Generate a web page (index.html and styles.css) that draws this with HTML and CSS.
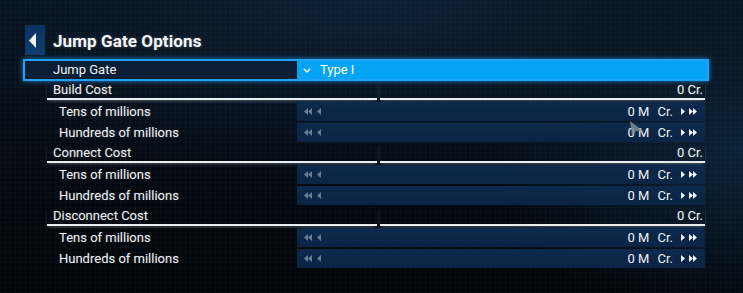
FILE: index.html
```html
<!DOCTYPE html>
<html>
<head>
<meta charset="utf-8">
<link rel="stylesheet" href="styles.css">
</head>
<body>
<div class="screen">
  <div class="panel">
    <div class="title-row">
      <div class="back-btn">
        <svg width="7" height="15" viewBox="0 0 7 15"><polygon points="7,0 7,15 0,7.5" fill="#f2f4f6"/></svg>
      </div>
      <h1 class="title">Jump Gate Options</h1>
    </div>

    <div class="select-row">
      <div class="select-label">Jump Gate</div>
      <div class="select-value">
        <svg class="chev" width="8" height="5" viewBox="0 0 8 5"><polyline points="0.8,0.8 4,4 7.2,0.8" fill="none" stroke="#fff" stroke-width="1.4"/></svg>
        <span>Type I</span>
      </div>
    </div>

    <div class="list">
      <div class="group">
        <div class="head">
          <span class="head-left">Build Cost</span>
          <span class="head-right">0 Cr.</span>
        </div>
        <div class="row">
          <div class="row-label">Tens of millions</div>
          <div class="bar">
            <span class="dec"><svg width="9" height="7" viewBox="0 0 9 7"><polygon points="4,0 4,7 0,3.5" /><polygon points="8,0 8,7 4,3.5"/></svg><svg width="5" height="7" viewBox="0 0 5 7"><polygon points="4,0 4,7 0,3.5"/></svg></span>
            <span class="val">0 M</span><span class="unit">Cr.</span>
            <span class="inc"><svg width="5" height="7" viewBox="0 0 5 7"><polygon points="0,0 0,7 4,3.5"/></svg><svg width="9" height="7" viewBox="0 0 9 7"><polygon points="0,0 0,7 4,3.5"/><polygon points="4,0 4,7 8,3.5"/></svg></span>
          </div>
        </div>
        <div class="row">
          <div class="row-label">Hundreds of millions</div>
          <div class="bar">
            <span class="dec"><svg width="9" height="7" viewBox="0 0 9 7"><polygon points="4,0 4,7 0,3.5" /><polygon points="8,0 8,7 4,3.5"/></svg><svg width="5" height="7" viewBox="0 0 5 7"><polygon points="4,0 4,7 0,3.5"/></svg></span>
            <span class="val">0 M</span><span class="unit">Cr.</span>
            <span class="inc"><svg width="5" height="7" viewBox="0 0 5 7"><polygon points="0,0 0,7 4,3.5"/></svg><svg width="9" height="7" viewBox="0 0 9 7"><polygon points="0,0 0,7 4,3.5"/><polygon points="4,0 4,7 8,3.5"/></svg></span>
          </div>
        </div>
      </div>

      <div class="group">
        <div class="head">
          <span class="head-left">Connect Cost</span>
          <span class="head-right">0 Cr.</span>
        </div>
        <div class="row">
          <div class="row-label">Tens of millions</div>
          <div class="bar">
            <span class="dec"><svg width="9" height="7" viewBox="0 0 9 7"><polygon points="4,0 4,7 0,3.5" /><polygon points="8,0 8,7 4,3.5"/></svg><svg width="5" height="7" viewBox="0 0 5 7"><polygon points="4,0 4,7 0,3.5"/></svg></span>
            <span class="val">0 M</span><span class="unit">Cr.</span>
            <span class="inc"><svg width="5" height="7" viewBox="0 0 5 7"><polygon points="0,0 0,7 4,3.5"/></svg><svg width="9" height="7" viewBox="0 0 9 7"><polygon points="0,0 0,7 4,3.5"/><polygon points="4,0 4,7 8,3.5"/></svg></span>
          </div>
        </div>
        <div class="row">
          <div class="row-label">Hundreds of millions</div>
          <div class="bar">
            <span class="dec"><svg width="9" height="7" viewBox="0 0 9 7"><polygon points="4,0 4,7 0,3.5" /><polygon points="8,0 8,7 4,3.5"/></svg><svg width="5" height="7" viewBox="0 0 5 7"><polygon points="4,0 4,7 0,3.5"/></svg></span>
            <span class="val">0 M</span><span class="unit">Cr.</span>
            <span class="inc"><svg width="5" height="7" viewBox="0 0 5 7"><polygon points="0,0 0,7 4,3.5"/></svg><svg width="9" height="7" viewBox="0 0 9 7"><polygon points="0,0 0,7 4,3.5"/><polygon points="4,0 4,7 8,3.5"/></svg></span>
          </div>
        </div>
      </div>

      <div class="group">
        <div class="head">
          <span class="head-left">Disconnect Cost</span>
          <span class="head-right">0 Cr.</span>
        </div>
        <div class="row">
          <div class="row-label">Tens of millions</div>
          <div class="bar">
            <span class="dec"><svg width="9" height="7" viewBox="0 0 9 7"><polygon points="4,0 4,7 0,3.5" /><polygon points="8,0 8,7 4,3.5"/></svg><svg width="5" height="7" viewBox="0 0 5 7"><polygon points="4,0 4,7 0,3.5"/></svg></span>
            <span class="val">0 M</span><span class="unit">Cr.</span>
            <span class="inc"><svg width="5" height="7" viewBox="0 0 5 7"><polygon points="0,0 0,7 4,3.5"/></svg><svg width="9" height="7" viewBox="0 0 9 7"><polygon points="0,0 0,7 4,3.5"/><polygon points="4,0 4,7 8,3.5"/></svg></span>
          </div>
        </div>
        <div class="row">
          <div class="row-label">Hundreds of millions</div>
          <div class="bar">
            <span class="dec"><svg width="9" height="7" viewBox="0 0 9 7"><polygon points="4,0 4,7 0,3.5" /><polygon points="8,0 8,7 4,3.5"/></svg><svg width="5" height="7" viewBox="0 0 5 7"><polygon points="4,0 4,7 0,3.5"/></svg></span>
            <span class="val">0 M</span><span class="unit">Cr.</span>
            <span class="inc"><svg width="5" height="7" viewBox="0 0 5 7"><polygon points="0,0 0,7 4,3.5"/></svg><svg width="9" height="7" viewBox="0 0 9 7"><polygon points="0,0 0,7 4,3.5"/><polygon points="4,0 4,7 8,3.5"/></svg></span>
          </div>
        </div>
      </div>
    </div>
  </div>

  <svg class="cursor" width="16" height="17" viewBox="0 0 16 17"><polygon points="1,1 14,11 7,11 3,16" fill="#7d8c96" fill-opacity="0.85"/></svg>
</div>
</body>
</html>
```

FILE: styles.css
```css
* { box-sizing: border-box; }

html, body {
  margin: 0;
  padding: 0;
}

body {
  width: 743px;
  height: 293px;
  overflow: hidden;
  font-family: Roboto, "Noto Sans", "Liberation Sans", sans-serif;
  color: #eef1f4;
  background: #03070c;
}

.screen {
  position: relative;
  width: 743px;
  height: 293px;
  background:
    repeating-linear-gradient(0deg, rgba(90, 150, 210, 0.04) 0 1px, transparent 1px 5px),
    repeating-linear-gradient(90deg, rgba(90, 150, 210, 0.04) 0 1px, transparent 1px 5px),
    radial-gradient(ellipse 70% 60% at 50% 0%, #0d2134 0%, #091624 45%, transparent 100%),
    radial-gradient(ellipse 35% 60% at 100% 50%, #0c2236 0%, transparent 100%),
    linear-gradient(180deg, #08121d 0%, #04080e 70%, #020407 100%);
  padding: 25px 0 0 23px;
}

.panel {
  width: 686px;
}

.title-row {
  display: flex;
  align-items: center;
  height: 30px;
}

.back-btn {
  width: 20px;
  height: 30px;
  margin-left: 2px;
  background: linear-gradient(180deg, #0b3260 0%, #0f3e70 100%);
  display: flex;
  align-items: center;
  padding-left: 4px;
}
.back-btn svg { display: block; }

.title {
  margin: 2px 0 0 8px;
  font-size: 17px;
  font-weight: 700;
  color: #f5f6f8;
  letter-spacing: 0.1px;
  text-shadow: 0 0 3px rgba(255, 255, 255, 0.25);
}

.select-row {
  margin-top: 4px;
  height: 22px;
  width: 686px;
  border: 2px solid #1fa2f7;
  box-shadow: 0 0 5px rgba(30, 160, 250, 0.75), inset 0 0 2px rgba(30, 160, 250, 0.6);
  display: grid;
  grid-template-columns: 272px 1fr;
  font-size: 13px;
}

.select-label {
  background: #0a1f35;
  padding-left: 28px;
  line-height: 18px;
  color: #f1f4f7;
}

.select-value {
  background: #05a3f3;
  display: flex;
  align-items: center;
  padding-left: 6px;
  color: #ffffff;
}
.select-value .chev { display: block; margin-right: 9px; margin-top: 1px; }
.select-value span { line-height: 18px; }

.list {
  margin-left: 24px;
  width: 658px;
}

.group {
  padding-bottom: 2px;
}

.head {
  display: flex;
  height: 19px;
  font-size: 13px;
}

.head-left,
.head-right {
  border-bottom: 2px solid #e9edf0;
  box-shadow: 0 2px 3px -1px rgba(200, 220, 240, 0.35);
  line-height: 17px;
  white-space: nowrap;
  text-shadow: 0 0 2px rgba(255, 255, 255, 0.2);
}

.head-left {
  width: 330px;
  padding-left: 6px;
}

.head-right {
  flex: 1;
  margin-left: 3px;
  text-align: right;
  padding-right: 2px;
}

.row {
  display: grid;
  grid-template-columns: 250px 1fr;
  height: 19px;
  margin-top: 2px;
  font-size: 13px;
}

.row-label {
  padding-left: 12px;
  line-height: 19px;
  white-space: nowrap;
  text-shadow: 0 0 2px rgba(255, 255, 255, 0.2);
}

.bar {
  background: linear-gradient(180deg, #0c2a4c 0%, #0a2444 100%);
  display: flex;
  align-items: center;
  padding: 0 7px 0 7px;
}

.dec, .inc {
  display: flex;
  align-items: center;
}
.dec svg, .inc svg { display: block; }
.dec svg { fill: #6a7c90; }
.dec svg + svg { margin-left: 4px; }
.inc svg { fill: #f4f7fa; }
.inc svg + svg { margin-left: 3px; }

.val {
  margin-left: auto;
  line-height: 19px;
}

.unit {
  margin-left: 8px;
  margin-right: 8px;
  line-height: 19px;
}

.cursor {
  position: absolute;
  left: 629px;
  top: 120px;
}
```
